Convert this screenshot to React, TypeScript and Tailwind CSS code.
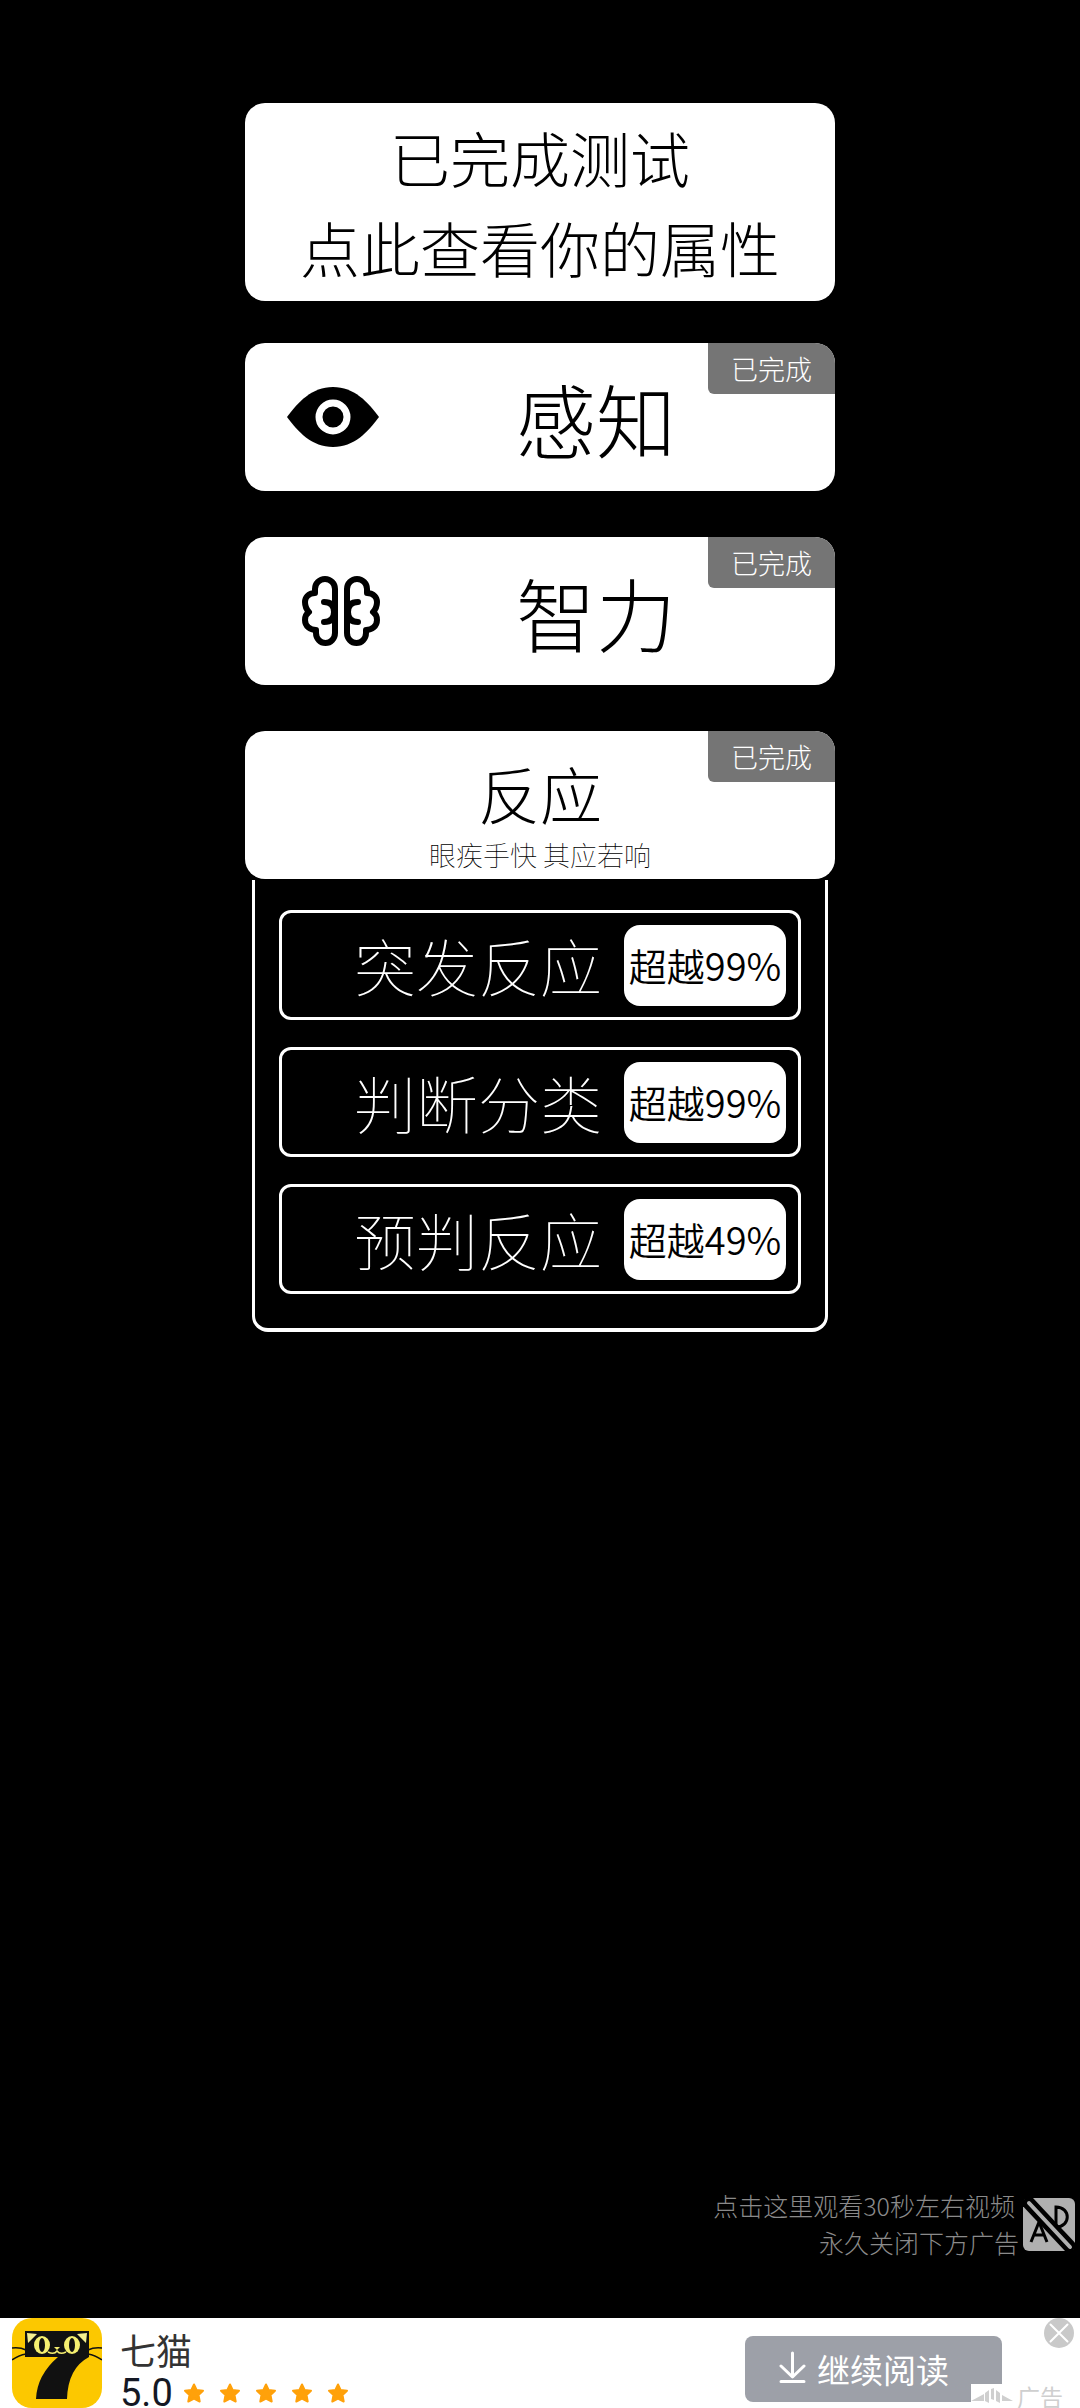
import React from 'react';

const CompletedBadge = () => (
    <span className="absolute right-0 top-0 flex h-[51px] w-[127px] items-center justify-center rounded-bl-md bg-[#757575] text-[27px] leading-none font-light text-white">
        已完成
    </span>
);

const EyeIcon = () => (
    <svg viewBox="0 0 92 60" className="h-[60px] w-[92px]" aria-hidden="true">
        <path d="M0 30C11 15 25 0 46 0s35 15 46 30C81 45 67 60 46 60S11 45 0 30Z" fill="#000" />
        <circle cx="46" cy="30" r="14" fill="none" stroke="#fff" strokeWidth="7" />
    </svg>
);

const BrainIcon = () => (
    <svg viewBox="0 0 78 70" className="ml-4 h-[70px] w-[78px]" fill="none" stroke="#000" strokeWidth="6" strokeLinecap="round" strokeLinejoin="round" aria-hidden="true">
        <path d="M33 13a10 10 0 0 0-20 0V17C6 17 3 22 3 26C3 31 5 34 7 36C4 38 3 41 3 44C3 50 8 54 14 54V57a9.500 10 0 0 0 19 0ZM22 26Q32 26 32 36M22 46Q32 46 32 36" />
        <path d="M45 13a10 10 0 0 1 20 0V17C72 17 75 22 75 26C75 31 73 34 71 36C74 38 75 41 75 44C75 50 70 54 64 54V57a9.500 10 0 0 1-19 0ZM56 26Q46 26 46 36M56 46Q46 46 46 36" />
    </svg>
);

const NoAdsIcon = () => (
    <svg viewBox="0 0 52 53" className="h-[53px] w-[52px]" fill="none" aria-hidden="true">
        <rect width="52" height="53" rx="6" fill="#b0b0b0" />
        <path d="M8 44L16 24L24 44M11 37H21M33 9V29C48 29 48 9 33 9Z" stroke="#000" strokeWidth="3" />
        <path d="M2 1L50 52" stroke="#000" strokeWidth="13" />
        <path d="M6 5L47 49" stroke="#b0b0b0" strokeWidth="4" strokeLinecap="round" />
    </svg>
);

const CatLogo = () => (
    <svg viewBox="0 0 90 90" className="h-[90px] w-[90px] shrink-0" aria-hidden="true">
        <rect width="90" height="90" rx="20" fill="#fcc800" />
        <path d="M13 13H77V39Q56 50 55 81H24Q25 57 46 39H13Z" fill="#111" />
        <path d="M0 30Q8 29 14 32M0 42Q7 37 14 36M90 30Q82 29 76 32M90 42Q83 37 76 36" stroke="#111" strokeWidth="1.500" fill="none" />
        <path d="M15 15L25 16L16 25ZM75 15L65 16L74 25Z" fill="#f5ef90" />
        <ellipse cx="30" cy="27" rx="8" ry="9" fill="#f5ef70" />
        <ellipse cx="60" cy="27" rx="8" ry="9" fill="#f5ef70" />
        <ellipse cx="30" cy="27" rx="3" ry="7" fill="#111" />
        <ellipse cx="60" cy="27" rx="3" ry="7" fill="#111" />
        <path d="M42 29H48L45 32Z" fill="#f5ef70" />
        <path d="M36 34Q42 37 45 33Q48 37 54 34" stroke="#f5ef70" strokeWidth="1.500" fill="none" />
    </svg>
);

const Star = () => (
    <svg viewBox="0 0 22 20" className="h-5 w-[22px]" aria-hidden="true">
        <path d="M11 1.500L13.600 7L20 7.700L15.500 12L16.700 18.500L11 15.500L5.300 18.500L6.500 12L2 7.700L8.400 7Z" fill="#ffa10a" stroke="#ffa10a" strokeWidth="2" strokeLinejoin="round" />
    </svg>
);

const categories = [
    { name: '感知', icon: <EyeIcon /> },
    { name: '智力', icon: <BrainIcon /> },
];

const tests = [
    { name: '突发反应', score: '超越99%' },
    { name: '判断分类', score: '超越99%' },
    { name: '预判反应', score: '超越49%' },
];

export default function App() {
    return (
        <div className="flex min-h-screen flex-col bg-black font-['Noto_Sans_CJK_SC',sans-serif] text-black">
            <main className="mx-auto flex w-[55%] max-w-[590px] flex-1 flex-col pt-[103px]">
                <button className="w-full rounded-[20px] bg-white py-[9px] text-[60px] leading-[90px] font-light">
                    已完成测试
                    <br />
                    点此查看你的属性
                </button>

                <div className="mt-[42px] flex flex-col gap-[46px]">
                    {categories.map((category) => (
                        <button key={category.name} className="relative flex h-[148px] items-center overflow-hidden rounded-[20px] bg-white">
                            <span className="flex w-[176px] justify-center">{category.icon}</span>
                            <span className="flex-1 pr-[64px] text-center text-[80px] leading-none font-light">{category.name}</span>
                            <CompletedBadge />
                        </button>
                    ))}

                    <section>
                        <button className="relative flex h-[148px] w-full flex-col items-center overflow-hidden rounded-[20px] bg-white pt-5">
                            <span className="text-[62px] leading-[84px] font-light">反应</span>
                            <span className="text-[27px] leading-[40px] font-thin">眼疾手快 其应若响</span>
                            <CompletedBadge />
                        </button>
                        <div className="mx-[7px] mt-px flex flex-col gap-[27px] rounded-b-2xl border-x-[3px] border-b-4 border-white px-6 pt-[30px] pb-[34px]">
                            {tests.map((test) => (
                                <button key={test.name} className="flex h-[110px] items-center justify-end gap-[22px] rounded-xl border-3 border-white pr-3">
                                    <span className="text-[62px] leading-none font-thin text-white">{test.name}</span>
                                    <span className="flex h-[81px] w-[162px] items-center justify-center rounded-2xl bg-white text-[38px] leading-none font-[350]">
                                        {test.score}
                                    </span>
                                </button>
                            ))}
                        </div>
                    </section>
                </div>
            </main>

            <button className="mb-[57px] flex items-center justify-end gap-1 self-end pr-[5px]">
                <span className="text-right text-[25px] leading-[37px] font-light text-[#8a8a8a]">
                    <span className="block pr-1">点击这里观看30秒左右视频</span>
                    <span className="block">永久关闭下方广告</span>
                </span>
                <NoAdsIcon />
            </button>

            <footer className="relative flex h-[90px] items-start bg-white pl-3">
                <CatLogo />
                <div className="flex-1 pl-[18px]">
                    <div className="pt-[10px] text-[36px] leading-[42px] text-[#333]">七猫</div>
                    <div className="flex items-center gap-[10px] font-[Roboto,sans-serif] text-[38px] leading-[46px] text-[#141824]">
                        5.0
                        <span className="flex gap-[14px]">
                            {[1, 2, 3, 4, 5].map((n) => (
                                <Star key={n} />
                            ))}
                        </span>
                    </div>
                </div>
                <button className="mt-[18px] mr-[78px] flex h-[66px] w-[257px] items-center gap-[11px] rounded-lg bg-[#9da0a8] pl-[34px] text-[33px] leading-none text-white">
                    <svg viewBox="0 0 27 32" className="mb-1 h-8 w-[27px]" fill="none" stroke="#fff" strokeWidth="3" strokeLinecap="round" strokeLinejoin="round" aria-hidden="true">
                        <path d="M13.500 2V25M2 15L13.500 26L25 15M2 30.500H25" />
                    </svg>
                    继续阅读
                </button>
                <button aria-label="关闭" className="absolute top-0 right-[6px]">
                    <svg viewBox="0 0 30 30" className="h-[30px] w-[30px]" aria-hidden="true">
                        <circle cx="15" cy="15" r="15" fill="#c9c9c9" />
                        <path d="M6.500 6.500L23.500 23.500M23.500 6.500L6.500 23.500" stroke="#fff" strokeWidth="2" strokeLinecap="round" />
                    </svg>
                </button>
                <div className="absolute right-0 bottom-0 flex h-6 w-[109px] items-center gap-1 bg-white text-[23px] leading-none text-[#cfcfcf]">
                    <svg viewBox="0 0 42 16" className="h-4 w-[42px]" fill="#cfcfcf" aria-hidden="true">
                        <path d="M0 13L13 6V13ZM14 5L18 2V15L14 13ZM20 1L23 0V12L20 11ZM25 2L29 5V15L25 13ZM31 7L42 13H31Z" />
                    </svg>
                    广告
                </div>
            </footer>
        </div>
    );
}
